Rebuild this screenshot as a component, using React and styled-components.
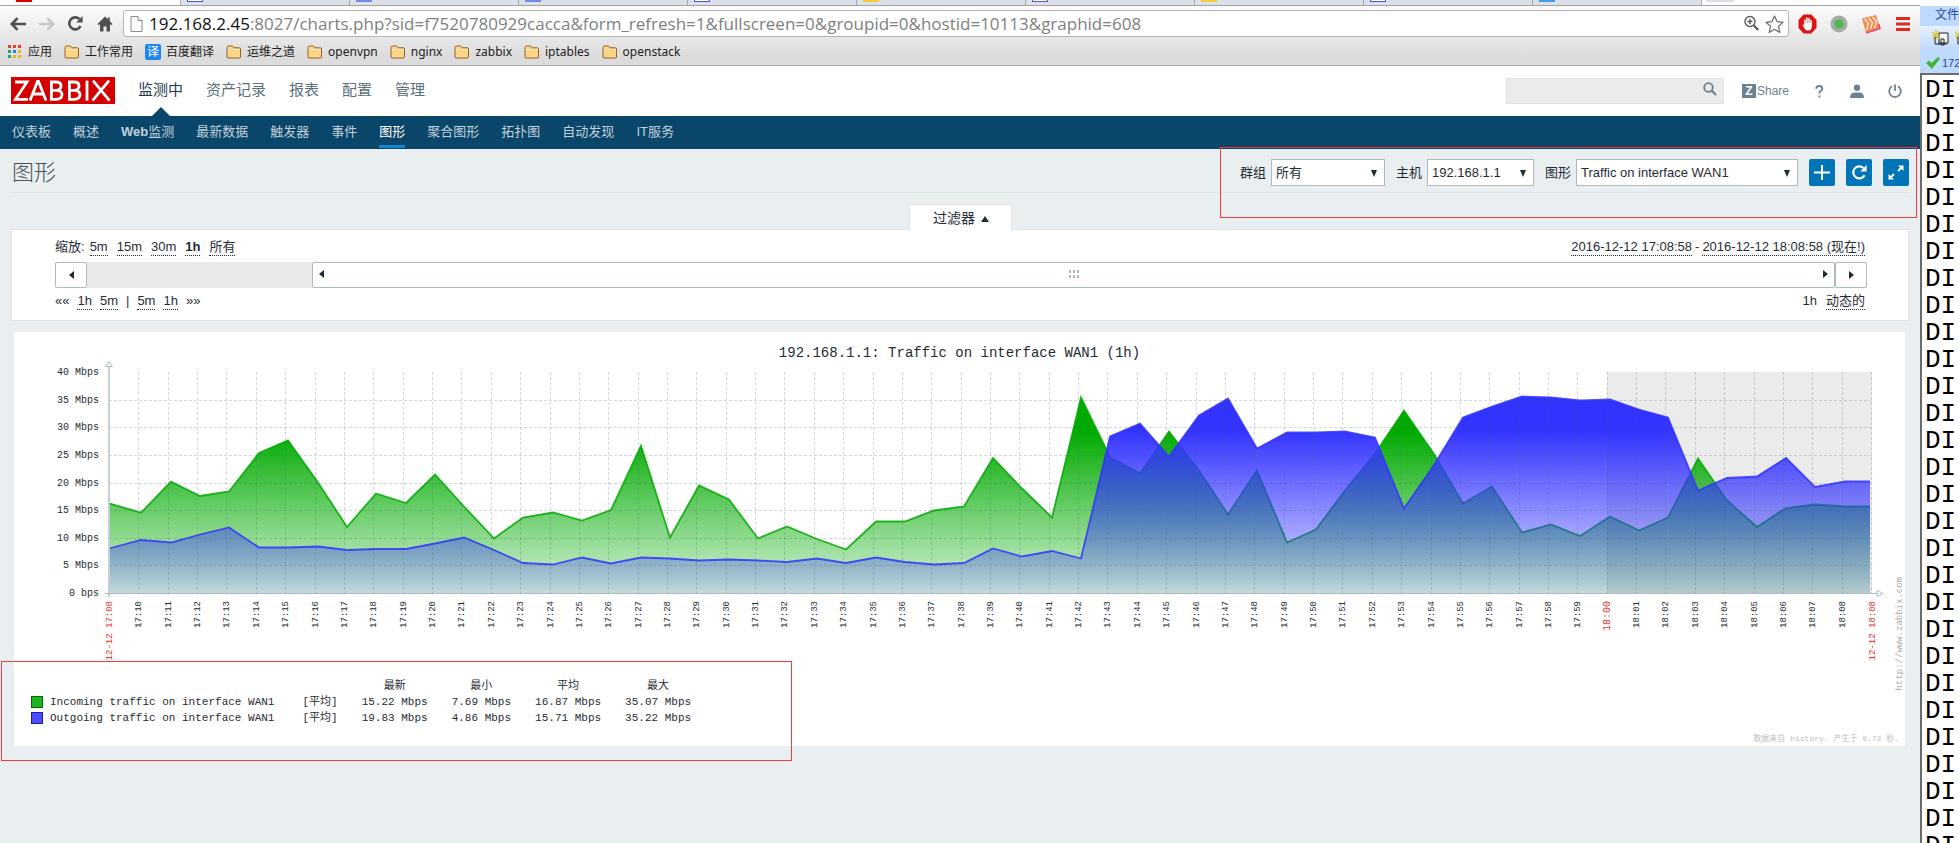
import React from "react";
import styled, { createGlobalStyle, css } from "styled-components";

const sans = '"Liberation Sans", "Noto Sans CJK SC", sans-serif';
const chrome = '"Noto Sans", "Noto Sans CJK SC", sans-serif';
const mono = '"Liberation Mono", "Noto Sans CJK SC", monospace';

const Global = createGlobalStyle`
  *, *::before, *::after { box-sizing: border-box; }
  body { margin: 0; background: #e9eef1; font: 13px/18px ${sans}; color: #1f2c33; }
  button, input, select { font: inherit; color: inherit; }
  svg { display: block; flex-shrink: 0; }
  h1, h2 { margin: 0; padding: 0; }
`;

const Desktop = styled.div`
  display: flex;
  min-height: 100vh;
`;

const Browser = styled.div`
  position: relative;
  flex: 1;
  min-width: 0;
  display: flex;
  flex-direction: column;
`;

/* ---- browser frame ---- */

const TabStrip = styled.div`
  display: flex;
  height: 6px;
  background: #fff;
  border-bottom: 1px solid #a3a3a6;
  overflow: hidden;
`;

const Tab = styled.div`
  width: ${(p) => (p.$active ? 181 : 169)}px;
  padding-left: ${(p) => (p.$active ? 16 : 6)}px;
  background: ${(p) => (p.$active ? "#fcfcfd" : "#dce0e8")};
  border-right: 1px solid #a5a8ad;
`;

const favicons = {
  red: css`background: #d40000; height: 2px;`,
  outline: css`background: #fff; border: 1px solid #4a55d8; border-top: 0; height: 2px;`,
  paw: css`background: #6f8bea; height: 2px;`,
  yellow: css`background: #f2cb3a; height: 2px;`,
  sky: css`background: #3f9cf2; height: 2px;`,
};

const Favicon = styled.div`
  width: 16px;
  ${(p) => favicons[p.$kind]}
`;

const NewTab = styled.div`
  width: 28px;
  height: 2px;
  margin-left: 4px;
  background: #d9dce2;
  border-radius: 0 0 4px 4px;
`;

const ChromeBars = styled.div`
  background: linear-gradient(#fcfcfd, #ececed 24px, #dcdcdc 50px);
  border-bottom: 1px solid #a8a8a8;
  font-family: ${chrome};
`;

const Toolbar = styled.div`
  display: flex;
  align-items: center;
  height: 35px;
  padding: 0 1px 0 3px;
`;

const ToolButton = styled.button`
  flex: none;
  display: grid;
  place-items: center;
  width: ${(p) => p.$width || 29}px;
  height: 27px;
  padding: 0;
  border: 0;
  background: none;
`;

const Address = styled.div`
  flex: 1;
  display: flex;
  align-items: center;
  gap: 5px;
  height: 27px;
  margin: 0 2px 0 4px;
  padding: 0 4px 0 6px;
  background: #fff;
  border: 1px solid #b4b4b6;
  border-radius: 3px;
  font-family: "Open Sans", sans-serif;
  font-size: 17px;
  line-height: 22px;
`;

const UrlText = styled.label`
  flex: 1;
  display: flex;
  margin-left: 1px;
  color: #111;
`;

const UrlInput = styled.input`
  flex: 1;
  min-width: 0;
  padding: 0;
  border: 0;
  outline: 0;
  color: #808080;
  background: none;
`;

const Bookmarks = styled.nav`
  display: flex;
  align-items: center;
  gap: 12px;
  height: 24px;
  padding: 0 0 2px 7px;
`;

const Bookmark = styled.a`
  display: flex;
  align-items: center;
  gap: 5px;
  font-size: 12px;
  line-height: 16px;
  color: #222;
  text-decoration: none;
`;

const TranslateBadge = styled.span`
  width: 16px;
  border-radius: 2px;
  background: #1d86f5;
  color: #fff;
  text-align: center;
`;

/* ---- zabbix header ---- */

const Header = styled.header`
  display: flex;
  align-items: center;
  height: 50px;
  padding: 0 6px 0 11px;
  background: #fff;
`;

const Logo = styled.a`
  display: grid;
  place-items: center;
  width: 104px;
  height: 27px;
  margin-bottom: 2px;
  background: #d40000;
`;

const MainMenu = styled.nav`
  flex: 1;
  display: flex;
  align-self: stretch;
  gap: 23px;
  padding-left: 23px;
`;

const MainLink = styled.a`
  display: flex;
  flex-direction: column;
  justify-content: space-between;
  align-items: center;
  padding-top: 14px;
  font-size: 15px;
  line-height: 20px;
  color: ${(p) => (p.$active ? "#1f3a4a" : "#5a6f7c")};
  text-decoration: none;
`;

const Pointer = styled.span`
  border: solid transparent;
  border-width: 0 9px 9px;
  border-bottom-color: #0a466a;
`;

const Search = styled.form`
  display: flex;
  align-items: center;
  width: 218px;
  height: 26px;
  background: #ebebeb;
  border: 1px solid #dfe4e7;
`;

const SearchInput = styled.input`
  flex: 1;
  min-width: 0;
  padding: 0 6px;
  border: 0;
  outline: 0;
  background: none;
`;

const SearchButton = styled.button`
  padding: 0 6px 4px;
  border: 0;
  background: none;
`;

const ShareLink = styled.a`
  display: flex;
  align-items: center;
  gap: 1px;
  margin: 0 11px 0 18px;
  color: #6d8290;
  font-size: 12px;
  line-height: 14px;
  text-decoration: none;
`;

const ShareMark = styled.span`
  width: 14px;
  background: #6d8290;
  color: #fff;
  font-weight: bold;
  text-align: center;
`;

const UserIcons = styled.div`
  display: flex;
`;

const UserButton = styled.button`
  display: grid;
  place-items: center;
  width: 38px;
  height: 26px;
  padding: 0;
  border: 0;
  background: none;
  color: #6d8290;
`;

const SubMenu = styled.nav`
  display: flex;
  gap: 22px;
  height: 33px;
  padding: 5px 12px 0;
  background: #0a466a;
`;

const SubLink = styled.a`
  height: 27px;
  line-height: 22px;
  font-size: 13px;
  color: ${(p) => (p.$active ? "#fff" : "#c1d0da")};
  border-bottom: 3px solid ${(p) => (p.$active ? "#1385cf" : "transparent")};
  text-decoration: none;
`;

const Latin = styled.span`
  font-weight: bold;
`;

/* ---- page title and selectors ---- */

const TitleBar = styled.div`
  display: flex;
  align-items: center;
  justify-content: space-between;
  height: 44px;
  margin: 0 11px 11px 12px;
  padding-top: 4px;
  border-bottom: 1px solid #dfe4e7;
`;

const Title = styled.h1`
  font-size: 22px;
  line-height: 26px;
  font-weight: 300;
  color: #44525a;
`;

const Selectors = styled.form`
  display: flex;
  align-items: center;
  gap: 11px;
`;

const Field = styled.label`
  display: flex;
  align-items: center;
  gap: 5px;
`;

const SelectBox = styled.span`
  display: grid;
  align-items: center;
  width: ${(p) => p.$width}px;

  > * { grid-area: 1 / 1; }
  > svg { justify-self: end; margin-right: 7px; pointer-events: none; }
`;

const Select = styled.select`
  width: 100%;
  height: 27px;
  padding: 0 4px;
  appearance: none;
  background: #fff;
  border: 1px solid #acbbc2;
  border-radius: 0;
`;

const IconButton = styled.button`
  display: grid;
  place-items: center;
  width: 26px;
  height: 27px;
  padding: 0;
  border: 0;
  border-radius: 2px;
  background: #0275b8;
`;

/* ---- time filter ---- */

const FilterTab = styled.button`
  position: relative;
  z-index: 1;
  display: flex;
  align-items: center;
  justify-content: center;
  gap: 5px;
  align-self: center;
  width: 103px;
  height: 26px;
  margin-bottom: -1px;
  padding: 0 0 0 3px;
  font-size: 14px;
  background: #fff;
  border: 1px solid #dfe4e7;
  border-bottom: 0;
`;

const FilterBox = styled.section`
  margin: 0 11px;
  padding: 8px 41px 8px 43px;
  background: #fff;
  border: 1px solid #dfe4e7;
`;

const FilterRow = styled.div`
  display: flex;
  justify-content: space-between;
  height: 20px;
  padding-right: 2px;
  line-height: 18px;
`;

const Inline = styled.div`
  display: flex;
  align-items: flex-start;
  gap: ${(p) => p.$gap || 9}px;
`;

const Dotted = styled.a`
  color: inherit;
  font-weight: ${(p) => (p.$bold ? "bold" : "normal")};
  line-height: 17px;
  border-bottom: 1px dotted #1f2c33;
  text-decoration: none;
`;

const Slider = styled.div`
  display: flex;
  height: 26px;
  margin: 4px 0;
  background: #eaeaea;
`;

const SliderButton = styled.button`
  display: grid;
  place-items: center;
  width: 32px;
  padding: 0;
  background: #fff;
  border: 1px solid #acbbc2;
  border-radius: 2px;
`;

const SliderWindow = styled.div`
  flex: 1;
  display: flex;
  align-items: center;
  justify-content: space-between;
  margin-left: 225px;
  padding: 0 5px 2px;
  background: #fff;
  border: 1px solid #acbbc2;
  border-radius: 2px;
`;

/* ---- graph ---- */

const GraphCard = styled.section`
  margin: 11px 15px 0 14px;
  background: #fff;
  font-family: ${mono};
`;

const GraphTitle = styled.h2`
  padding-top: 14px;
  font-size: 14px;
  line-height: 14px;
  font-weight: normal;
  text-align: center;
`;

const Plot = styled.svg`
  width: 100%;
  height: auto;
  overflow: visible;
  font-family: ${mono};
`;

const Legend = styled.table`
  margin: 10px 0 0 17px;
  border-collapse: collapse;
  font-size: 11px;
  line-height: 16px;
  white-space: pre;
`;

const LegendCell = styled.td`
  height: 16px;
  padding: 0 ${(p) => p.$gap ?? 24}px 0 0;
  text-align: left;
`;

const LegendHead = styled.th`
  height: 16px;
  padding: 0 24px 0 0;
  font-weight: normal;
  text-align: center;
`;

const Swatch = styled.div`
  width: 12px;
  height: 12px;
  background: ${(p) => p.$color};
  border: 1px solid ${(p) => p.$edge};
`;

const GraphNote = styled.p`
  margin: 5px 6px 0;
  font-size: 8px;
  line-height: 15px;
  text-align: right;
  color: #bdbdbd;
`;

const Marker = styled.div`
  position: absolute;
  border: 1px solid #f03c3c;
  pointer-events: none;
`;

const SelectorMarker = styled(Marker)`
  top: 147px;
  right: 3px;
  width: 697px;
  height: 71px;
`;

const LegendMarker = styled(Marker)`
  top: 661px;
  left: 1px;
  width: 791px;
  height: 100px;
`;

/* ---- terminal window at the edge ---- */

const Terminal = styled.aside`
  display: flex;
  flex-direction: column;
  width: 39px;
  padding-top: 6px;
  background: #fff;
  overflow: hidden;
  white-space: nowrap;
`;

const TermMenu = styled.div`
  height: 20px;
  padding: 0 0 0 15px;
  background: #bfdaff;
  color: #2c4c9c;
  font-size: 12px;
  line-height: 18px;
`;

const TermTools = styled.div`
  display: flex;
  gap: 6px;
  height: 25px;
  padding: 4px 0 0 12px;
  background: linear-gradient(#e6f0ff, #bfd8fb);
`;

const TermTab = styled.div`
  display: flex;
  align-items: center;
  gap: 2px;
  height: 22px;
  padding: 1px 0 0 6px;
  background: #bfdaff;
  color: #24459a;
  font-size: 11px;
`;

const TermScreen = styled.div`
  flex: 1 1 0;
  height: 0;
  padding: 2px 0 0 3px;
  overflow: hidden;
  border: solid #6b6b6b;
  border-width: 2px 0 0 2px;
  font: 26px/27px ${mono};
  color: #000;
`;

/* ---- drawings ---- */

const Arrow = ({ dir, size = 7 }) => {
  const paths = {
    left: "M6 1v8L1 5z",
    right: "M1 1v8l5-4z",
    up: "M1 9h8L5 3z",
    down: "M1 2h6L4 9z",
  };
  return (
    <svg width={size} height="10" viewBox={`0 0 ${size} 10`} fill="#1f2c33">
      <path d={paths[dir]} />
    </svg>
  );
};

const BackIcon = ({ color, flip }) => (
  <svg width="16" height="14" viewBox="0 0 16 14" fill="none" stroke={color} strokeWidth="2.6">
    <path d={flip ? "M0 7h14M8.5 1.2L14.2 7l-5.7 5.8" : "M16 7H2M7.5 1.2L1.8 7l5.7 5.8"} />
  </svg>
);

const ReloadIcon = ({ color = "#505050", width = 2.6, size = 17 }) => (
  <svg width={size} height={size} viewBox="0 0 17 17" fill="none">
    <path d="M13.6 11.2A6 6 0 1 1 12.4 4" stroke={color} strokeWidth={width} />
    <path d="M15.6 1v6.4H9.2z" fill={color} />
  </svg>
);

const HomeIcon = () => (
  <svg width="16" height="16" viewBox="0 0 16 16" fill="#505050">
    <path d="M8 .5L.5 8l1.3 1.2L3 8.1v7.4h3.5v-5h3v5H13V8.1l1.2 1.1L15.5 8l-2.7-2.7V1.5h-2v1.8z" />
  </svg>
);

const PageIcon = () => (
  <svg width="13" height="16" viewBox="0 0 13 16" fill="#fff" stroke="#8a8a8a">
    <path d="M1 .5h7l4 4v11H1z" />
    <path d="M8 .5v4h4" />
  </svg>
);

const FolderIcon = () => (
  <svg width="16" height="14" viewBox="0 0 16 14">
    <path d="M1 12V2.5Q1 1 2.5 1h4L8 2.800h5.500q1 0 1 1.200v8q0 1-1 1H2q-1 0-1-1z" fill="#fbd488" stroke="#94632c" />
    <path d="M1.800 4.500h12" stroke="#fdeaba" />
  </svg>
);

const AppsIcon = () => {
  const colors = ["#e5402f", "#e5402f", "#e5402f", "#27a35a", "#2f7de0", "#f0b429", "#27a35a", "#f0b429", "#f0b429"];
  return (
    <svg width="16" height="14" viewBox="0 0 16 14">
      {colors.map((c, i) => (
        <rect key={i} x={1 + (i % 3) * 5} y={Math.floor(i / 3) * 5} width="3" height="3" fill={c} />
      ))}
    </svg>
  );
};

const ZoomIcon = () => (
  <svg width="17" height="17" viewBox="0 0 17 17" fill="none" stroke="#5a5a5a" strokeWidth="1.4">
    <circle cx="7" cy="6.5" r="5" />
    <path d="M4.500 6.500h5M7 4v5" />
    <path d="M10.800 10.500l4.500 4.500" strokeWidth="2.4" />
  </svg>
);

const StarIcon = () => (
  <svg width="19" height="18" viewBox="0 0 19 18" fill="#fff" stroke="#6a6a6a" strokeWidth="1.2" strokeLinejoin="round">
    <path d="M9.500 1l2.500 5.600 6 .7-4.500 4.100 1.300 6-5.300-3.100-5.300 3.100 1.300-6L1 7.300l6-.7z" />
  </svg>
);

const StopHandIcon = () => (
  <svg width="19" height="20" viewBox="0 0 19 20">
    <path d="M5.700 .5h7.600l5.200 5.500v8l-5.200 5.500H5.700L.5 14V6z" fill="#dc1414" />
    <path d="M7 10V6M8.900 9V4M11 9V4.500M13 11V6.500" stroke="#fff" strokeWidth="1.5" strokeLinecap="round" />
    <path d="M6.300 9h7.400v4.500q-.5 3-3.200 3H9Q7 16 4.500 11q.7-1 1.800.3z" fill="#fff" />
  </svg>
);

const DotIcon = () => (
  <svg width="18" height="18" viewBox="0 0 18 18">
    <circle cx="9" cy="9" r="8.5" fill="#a9a9a9" />
    <circle cx="9" cy="9" r="4.5" fill="#4cba4a" />
  </svg>
);

const WavesIcon = () => (
  <svg width="20" height="20" viewBox="0 0 20 20">
    <path d="M1 4.500L15 1l4 13.500L5 19z" fill="#f58a4e" />
    <path d="M3.500 5l4 4.500L5.500 16M7.500 4l4 4.500-2 6.500M11.500 3l4 4.500-2 6.500" fill="none" stroke="#ffe9d8" strokeWidth="1.4" />
    <path d="M5 19l14-4.500L17.800 10" fill="none" stroke="#f0437d" strokeWidth="1.5" />
  </svg>
);

const MenuIcon = () => (
  <svg width="14" height="14" viewBox="0 0 14 14" fill="#dd2a20">
    <path d="M0 0h14v3H0zM0 5.500h14v3H0zM0 11h14v3H0z" />
  </svg>
);

const ZabbixLogo = () => (
  <svg width="104" height="27" viewBox="0 0 104 27" role="img" aria-label="ZABBIX" fill="none" stroke="#fff" strokeWidth="2.8">
    <path d="M4 5h12L4.500 22.300H17" />
    <path d="M19 23.500L26.500 4.500h1L35 23.500M22 17h10.500" />
    <path d="M39 5h6q5 0 5 4t-5 4.300h-6M45 13.300q6 .2 6 4.400t-6 4.600h-4.600V4" />
    <path d="M57 5h6q5 0 5 4t-5 4.300h-6M63 13.300q6 .2 6 4.400t-6 4.600h-4.600V4" />
    <path d="M76 3.600v20" />
    <path d="M82 3.600l16.500 20M98 3.600l-16.500 20" />
  </svg>
);

const SearchIcon = () => (
  <svg width="14" height="14" viewBox="0 0 14 14" fill="none" stroke="#6d8290">
    <circle cx="5.5" cy="5.5" r="4.3" strokeWidth="1.8" />
    <path d="M8.800 8.800L13 13" strokeWidth="2.2" />
  </svg>
);

const HelpIcon = () => (
  <svg width="9" height="13" viewBox="0 0 9 13" fill="none" stroke="#6d8290" strokeWidth="1.9">
    <path d="M1.200 3.800Q1.400 1 4.300 1t3 2.500q0 1.300-1.500 2.300T4.400 8.600" />
    <path d="M4.400 10.500v2" />
  </svg>
);

const UserIcon = () => (
  <svg width="14" height="14" viewBox="0 0 14 14" fill="#6d8290">
    <circle cx="7" cy="3.8" r="3.2" />
    <path d="M0 14q0-5 4-5.500h6q4 .5 4 5.500z" />
  </svg>
);

const PowerIcon = () => (
  <svg width="14" height="14" viewBox="0 0 14 14" fill="none" stroke="#6d8290" strokeWidth="1.8">
    <path d="M4 2.300a5.800 5.800 0 1 0 6 0M7 .5v6.500" />
  </svg>
);

const PlusIcon = () => (
  <svg width="16" height="15" viewBox="0 0 16 15" stroke="#fff" strokeWidth="2">
    <path d="M0 7.500h16M8 0v15" />
  </svg>
);

const ExpandIcon = () => (
  <svg width="16" height="17" viewBox="0 0 16 17" fill="#fff" stroke="#fff">
    <path d="M10 1.500h5.500V7zM.5 10v5.500H6z" stroke="none" />
    <path d="M13.500 3.500l-3.500 3.500M2.500 13.500L6 10" strokeWidth="2" />
  </svg>
);

const GripIcon = () => (
  <svg width="12" height="8" viewBox="0 0 12 8" fill="#acbbc2">
    <path d="M1 0h2v3H1zM5 0h2v3H5zM9 0h2v3H9zM1 5h2v3H1zM5 5h2v3H5zM9 5h2v3H9z" />
  </svg>
);

const SessionIcon = () => (
  <svg width="17" height="17" viewBox="0 0 17 17" fill="none">
    <path d="M7 3h9v10H7z" fill="#f4f4f4" stroke="#222" />
    <path d="M9 9h3v6H9zM6 14h9" stroke="#222" />
    <path d="M0 2l7 7M7 1L1 9M0 6h8M4 0v9" stroke="#d6c21c" strokeWidth="1.2" />
    <path d="M3 7v7h4" stroke="#222" />
  </svg>
);

const CheckIcon = () => (
  <svg width="14" height="12" viewBox="0 0 14 12">
    <path d="M0 6l3-2.500L5.500 6 12 0l2 1.500L6 12z" fill="#3fb53a" />
  </svg>
);

/* ---- chart data: one sample a minute, as heights in the plot ---- */

const incoming = [
  143.3, 152.7, 121.7, 136, 131.5, 93, 80.3, 122.5, 167, 133.5, 143, 114.5, 146.5, 178.5, 157.5, 152.5, 160.5, 150,
  85.7, 177.5, 125.5, 139.5, 178.5, 166.5, 179, 189.5, 161.5, 161.5, 150.5, 146.5, 98, 128.5, 157.5, 37.5, 97, 113.5,
  71.5, 110.5, 154.5, 110.5, 182.5, 169.5, 130.5, 93.5, 50.5, 94, 143.5, 126.5, 172.5, 164.5, 176, 156.5, 170.5,
  157.5, 98.5, 140.5, 167, 148, 144.5, 146.5,
];

const outgoing = [
  188.5, 180, 182.5, 174.5, 167.5, 187.5, 187.5, 186.5, 190, 189, 189, 183.5, 177.5, 190, 203, 204.5, 197.5, 203.5,
  197.5, 198.5, 200.5, 199.5, 200.5, 202, 198.5, 203, 197.5, 202, 204.5, 203, 188.5, 196.5, 191, 198.5, 76.5, 63.5,
  96.5, 55.5, 38.5, 88.5, 72.5, 72.5, 71.5, 77.5, 148.5, 105, 57.5, 46.5, 36.5, 37.5, 40.5, 39.5, 49.5, 57.5, 130.5,
  118, 116.5, 98, 127, 121.5,
];

const left = 95;
const right = 1857;
const base = 233;
const top = 12;
const minute = (right - left) / 60;

const tickX = (i) => Math.round(left + (i + 1) * minute);
const tickLabel = (i) => {
  const m = 10 + i;
  return `${17 + Math.floor(m / 60)}:${String(m % 60).padStart(2, "0")}`;
};
const ticks = Array.from({ length: 59 }, (_, i) => i);
const levels = [40, 35, 30, 25, 20, 15, 10, 5, 0];
const levelY = (v) => base - (v / 40) * (base - top);

const line = (values) =>
  values.map((y, i) => `${i ? tickX(i - 1) + 3 : left},${y}`).join(" ") + ` ${right - 1},${values[values.length - 1]}`;

const Series = ({ values, color, id }) => (
  <>
    <polygon points={`${left},${base} ${line(values)} ${right - 1},${base}`} fill={`url(#${id})`} />
    <polyline points={line(values)} fill="none" stroke={color} strokeOpacity=".85" strokeWidth="1.8" />
  </>
);

const Fade = ({ id, color, end }) => (
  <linearGradient id={id} gradientUnits="userSpaceOnUse" x1="0" y1="70" x2="0" y2={base}>
    <stop offset="0" stopColor={color} />
    <stop offset="1" stopColor={color} stopOpacity={end} />
  </linearGradient>
);

const Upright = ({ x, y, children, ...rest }) => (
  <text transform={`translate(${x} ${y}) rotate(-90)`} textAnchor="end" {...rest}>
    {children}
  </text>
);

const Chart = () => (
  <Plot viewBox="0 0 1891 308" role="img" aria-label="Traffic on interface WAN1">
    <defs>
      <Fade id="fade-in" color="#00aa00" end={0.15} />
      <Fade id="fade-out" color="#3333ff" end={0.13} />
    </defs>
    <rect x={tickX(50)} y={top} width={right - tickX(50) + 1} height={base - top} fill="#ebebeb" />
    <Series id="fade-in" values={incoming} color="#00aa00" />
    <Series id="fade-out" values={outgoing} color="#3333ff" />
    <g stroke="#3c5f70" strokeOpacity=".24" strokeDasharray="3 2">
      {levels.slice(1, -1).map((v) => (
        <path key={v} d={`M${left} ${Math.round(levelY(v)) + 0.5}H${right}`} />
      ))}
      {ticks.map((i) => (
        <path key={i} d={`M${tickX(i) + 0.5} ${top}V${base}`} />
      ))}
      <path d={`M${right + 0.5} ${top}V${base}`} />
    </g>
    <path d={`M${left} 6V${base + 4}`} stroke="#c5d0d6" strokeWidth="2" />
    <path d={`M${left - 4} ${base + 0.5}H${right + 6}`} stroke="#acbbc2" />
    <path d={`M${left - 3.5} 6.5h7L${left} 1.5zM${right + 6} ${base - 2.5}v6l6-3z`} fill="#fff" stroke="#acbbc2" />
    <g fontSize="10" fill="#1f2c33" textAnchor="end">
      {levels.map((v) => (
        <text key={v} x="85" y={levelY(v) + 3}>
          {v ? `${v} Mbps` : "0 bps"}
        </text>
      ))}
    </g>
    <g fontSize="9" fill="#1f2c33">
      {ticks.map((i) => (
        <Upright key={i} x={tickX(i) + 3} y={241} {...(i === 50 ? { fill: "#e33734", fontSize: 10 } : {})}>
          {tickLabel(i)}
        </Upright>
      ))}
    </g>
    <g fontSize="9" fill="#e33734">
      <Upright x={left + 3} y={241}>12-12 17:08</Upright>
      <Upright x={right + 4} y={241}>12-12 18:08</Upright>
    </g>
    <Upright x={1888} y={217} fontSize="9" fill="#aaa">http://www.zabbix.com</Upright>
  </Plot>
);

/* ---- page ---- */

const tabs = ["outline", "paw", "paw", "outline", "yellow", "outline", "yellow", "outline", "sky"];
const folders = ["openvpn", "nginx", "zabbix", "iptables", "openstack"];
const mainItems = ["监测中", "资产记录", "报表", "配置", "管理"];
const subItems = ["仪表板", "概述", ["Web", "监测"], "最新数据", "触发器", "事件", "图形", "聚合图形", "拓扑图", "自动发现", "IT服务"];
const legendRows = [
  { name: "Incoming traffic on interface WAN1", color: "#1eb41e", edge: "#006600", values: ["15.22 Mbps", "7.69 Mbps", "16.87 Mbps", "35.07 Mbps"] },
  { name: "Outgoing traffic on interface WAN1", color: "#4c4cff", edge: "#1f1f99", values: ["19.83 Mbps", "4.86 Mbps", "15.71 Mbps", "35.22 Mbps"] },
];

const Folder = ({ children }) => (
  <Bookmark href="#">
    <FolderIcon />
    {children}
  </Bookmark>
);

const Picker = ({ label, value, width }) => (
  <Field>
    {label}
    <SelectBox $width={width}>
      <Select defaultValue={value}>
        <option>{value}</option>
      </Select>
      <Arrow dir="down" size={8} />
    </SelectBox>
  </Field>
);

export default function App() {
  return (
    <Desktop>
      <Global />
      <Browser>
        <TabStrip>
          <Tab $active><Favicon $kind="red" /></Tab>
          {tabs.map((kind, i) => (
            <Tab key={i}><Favicon $kind={kind} /></Tab>
          ))}
          <NewTab />
        </TabStrip>
        <ChromeBars>
          <Toolbar>
            <ToolButton aria-label="Back"><BackIcon color="#505050" /></ToolButton>
            <ToolButton aria-label="Forward"><BackIcon color="#c6c6c6" flip /></ToolButton>
            <ToolButton aria-label="Reload"><ReloadIcon /></ToolButton>
            <ToolButton aria-label="Home"><HomeIcon /></ToolButton>
            <Address>
              <PageIcon />
              <UrlText>
                192.168.2.45
                <UrlInput
                  aria-label="Address"
                  defaultValue=":8027/charts.php?sid=f7520780929cacca&form_refresh=1&fullscreen=0&groupid=0&hostid=10113&graphid=608"
                />
              </UrlText>
              <ZoomIcon />
              <StarIcon />
            </Address>
            <ToolButton $width={32} aria-label="Blocker"><StopHandIcon /></ToolButton>
            <ToolButton $width={32} aria-label="Status"><DotIcon /></ToolButton>
            <ToolButton $width={32} aria-label="Extension"><WavesIcon /></ToolButton>
            <ToolButton $width={32} aria-label="Menu"><MenuIcon /></ToolButton>
          </Toolbar>
          <Bookmarks>
            <Bookmark href="#"><AppsIcon />应用</Bookmark>
            <Folder>工作常用</Folder>
            <Bookmark href="#"><TranslateBadge>译</TranslateBadge>百度翻译</Bookmark>
            <Folder>运维之道</Folder>
            {folders.map((f) => <Folder key={f}>{f}</Folder>)}
          </Bookmarks>
        </ChromeBars>

        <Header>
          <Logo href="#"><ZabbixLogo /></Logo>
          <MainMenu>
            {mainItems.map((item, i) => (
              <MainLink key={item} href="#" $active={i === 0}>
                {item}
                {i === 0 && <Pointer />}
              </MainLink>
            ))}
          </MainMenu>
          <Search>
            <SearchInput aria-label="Search" />
            <SearchButton type="button" aria-label="Find"><SearchIcon /></SearchButton>
          </Search>
          <ShareLink href="#"><ShareMark>Z</ShareMark>Share</ShareLink>
          <UserIcons>
            <UserButton aria-label="Help"><HelpIcon /></UserButton>
            <UserButton aria-label="Profile"><UserIcon /></UserButton>
            <UserButton aria-label="Sign out"><PowerIcon /></UserButton>
          </UserIcons>
        </Header>
        <SubMenu>
          {subItems.map((item) => (
            <SubLink key={item} href="#" $active={item === "图形"}>
              {Array.isArray(item) ? <><Latin>{item[0]}</Latin>{item[1]}</> : item}
            </SubLink>
          ))}
        </SubMenu>

        <TitleBar>
          <Title>图形</Title>
          <Selectors>
            <Picker label="群组" value="所有" width={114} />
            <Picker label="主机" value="192.168.1.1" width={107} />
            <Picker label="图形" value="Traffic on interface WAN1" width={222} />
            <IconButton type="button" aria-label="Add"><PlusIcon /></IconButton>
            <IconButton type="button" aria-label="Refresh"><ReloadIcon color="#fff" width={2.2} /></IconButton>
            <IconButton type="button" aria-label="Fullscreen"><ExpandIcon /></IconButton>
          </Selectors>
        </TitleBar>

        <FilterTab>过滤器<Arrow dir="up" size={10} /></FilterTab>
        <FilterBox>
          <FilterRow>
            <Inline>
              <Inline $gap={5}>
                <span>缩放:</span>
                <Dotted href="#">5m</Dotted>
              </Inline>
              <Dotted href="#">15m</Dotted>
              <Dotted href="#">30m</Dotted>
              <Dotted href="#" $bold>1h</Dotted>
              <Dotted href="#">所有</Dotted>
            </Inline>
            <Inline $gap={3}>
              <Dotted href="#">2016-12-12 17:08:58</Dotted>
              <span>-</span>
              <Dotted href="#">2016-12-12 18:08:58 (现在!)</Dotted>
            </Inline>
          </FilterRow>
          <Slider>
            <SliderButton aria-label="Earlier"><Arrow dir="left" /></SliderButton>
            <SliderWindow><Arrow dir="left" /><GripIcon /><Arrow dir="right" /></SliderWindow>
            <SliderButton aria-label="Later"><Arrow dir="right" /></SliderButton>
          </Slider>
          <FilterRow>
            <Inline $gap={8}>
              <span>««</span>
              <Dotted href="#">1h</Dotted>
              <Dotted href="#">5m</Dotted>
              <span>|</span>
              <Dotted href="#">5m</Dotted>
              <Dotted href="#">1h</Dotted>
              <span>»»</span>
            </Inline>
            <Inline>
              <span>1h</span>
              <Dotted href="#">动态的</Dotted>
            </Inline>
          </FilterRow>
        </FilterBox>

        <GraphCard>
          <GraphTitle>192.168.1.1: Traffic on interface WAN1 (1h)</GraphTitle>
          <Chart />
          <Legend>
            <thead>
              <tr>
                <LegendCell colSpan={3} />
                {["最新", "最小", "平均", "最大"].map((h) => <LegendHead key={h}>{h}</LegendHead>)}
              </tr>
            </thead>
            <tbody>
              {legendRows.map((r) => (
                <tr key={r.name}>
                  <LegendCell $gap={7}><Swatch $color={r.color} $edge={r.edge} /></LegendCell>
                  <LegendCell $gap={28}>{r.name}</LegendCell>
                  <LegendCell>[平均]</LegendCell>
                  {r.values.map((v) => <LegendCell key={v}>{v}</LegendCell>)}
                </tr>
              ))}
            </tbody>
          </Legend>
          <GraphNote>数据来自 history. 产生于 0.72 秒.</GraphNote>
        </GraphCard>

        <SelectorMarker />
        <LegendMarker />
      </Browser>

      <Terminal>
        <TermMenu>文件</TermMenu>
        <TermTools><SessionIcon /><SessionIcon /></TermTools>
        <TermTab><CheckIcon />172</TermTab>
        <TermScreen>
          {Array.from({ length: 29 }, (_, i) => <div key={i}>DI</div>)}
        </TermScreen>
      </Terminal>
    </Desktop>
  );
}
